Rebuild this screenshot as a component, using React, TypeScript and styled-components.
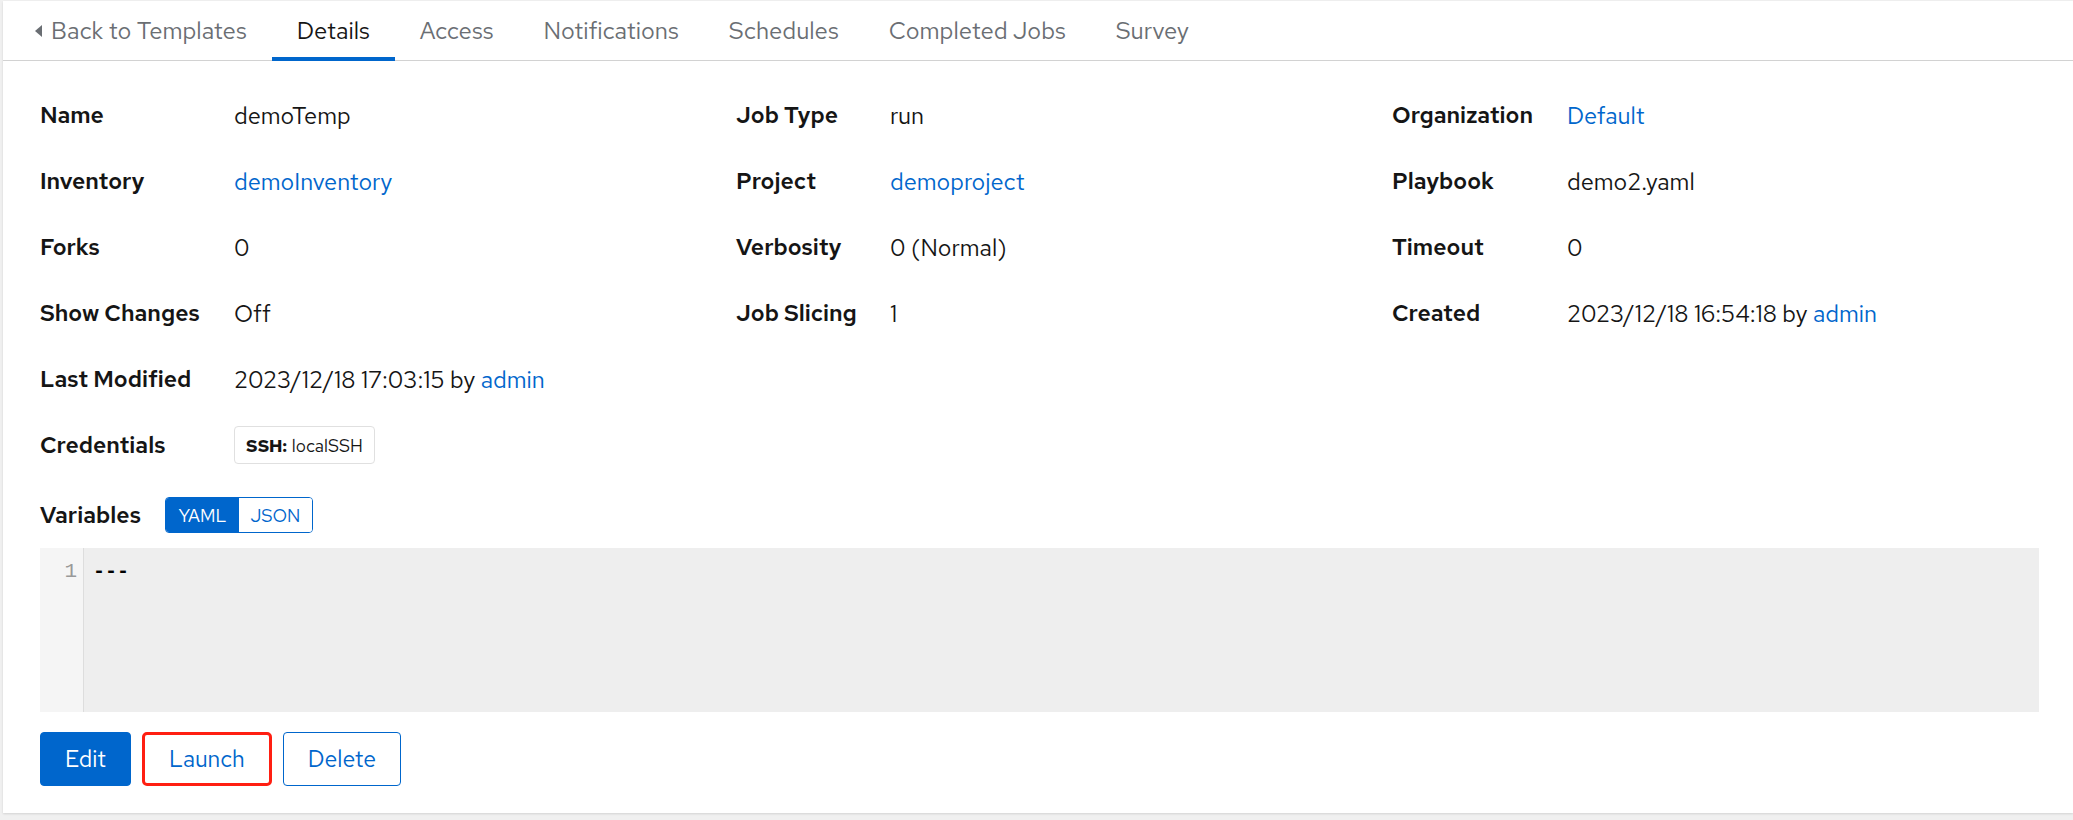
import React from "react";
import styled, { createGlobalStyle } from "styled-components";

const GlobalStyle = createGlobalStyle`
  html, body { margin: 0; padding: 0; }
  body {
    background: #f0f0f0;
    font-family: "Red Hat Text", "Open Sans", "Noto Sans", sans-serif;
    color: #151515;
  }
`;

const Page = styled.div`
  padding: 1px 0 0 3px;
  height: 820px;
  box-sizing: border-box;
`;

const Card = styled.div`
  background: #ffffff;
  box-shadow: 0 1px 2px rgba(0, 0, 0, 0.12);
`;

const TabBar = styled.nav`
  display: flex;
  height: 59px;
  padding-left: 7px;
  border-bottom: 1px solid #d2d2d2;
`;

const Tab = styled.a<{ $active?: boolean }>`
  position: relative;
  display: flex;
  align-items: center;
  gap: 9px;
  padding: 0 25px;
  font-size: 23.8px;
  color: ${(p) => (p.$active ? "#151515" : "#6a6e73")};
  text-decoration: none;
  white-space: nowrap;
  cursor: pointer;
  &::after {
    content: "";
    position: absolute;
    left: 0;
    right: 0;
    bottom: -1px;
    height: 4px;
    background: ${(p) => (p.$active ? "#0066cc" : "transparent")};
  }
`;

const Caret = styled.span`
  width: 0;
  height: 0;
  border-top: 6px solid transparent;
  border-bottom: 6px solid transparent;
  border-right: 7px solid #6a6e73;
`;

const Body = styled.div`
  padding: 34px 34px 27px 37px;
`;

const DetailGrid = styled.dl`
  display: grid;
  grid-template-columns: 164px 1fr 124px 1fr 145px 1fr;
  grid-auto-rows: 40px;
  column-gap: 30px;
  row-gap: 26px;
  align-items: center;
  margin: 0;
`;

const Label = styled.dt<{ $col: number }>`
  grid-column: ${(p) => p.$col * 2 - 1};
  font-size: 23px;
  font-weight: 600;
  white-space: nowrap;
`;

const Value = styled.dd<{ $col: number }>`
  grid-column: ${(p) => p.$col * 2};
  margin: 0;
  font-size: 23.5px;
  white-space: nowrap;
`;

const Link = styled.a`
  color: #0066cc;
  text-decoration: none;
`;

const Chip = styled.span`
  display: inline-flex;
  align-items: center;
  height: 38px;
  box-sizing: border-box;
  padding: 0 11px;
  border: 1px solid #e0e0e0;
  border-radius: 4px;
  font-size: 17.5px;
  gap: 5px;
  b { font-weight: 700; }
`;

const VarRow = styled.div`
  display: flex;
  align-items: center;
  gap: 24px;
  margin-top: 32px;
  height: 36px;
`;

const VarLabel = styled.span`
  font-size: 23px;
  font-weight: 600;
`;

const Toggle = styled.div`
  display: flex;
  height: 36px;
  box-sizing: border-box;
  border: 1px solid #0066cc;
  border-radius: 4px;
  overflow: hidden;
`;

const ToggleItem = styled.button<{ $on?: boolean }>`
  width: 73px;
  border: none;
  font-family: inherit;
  font-size: 18px;
  background: ${(p) => (p.$on ? "#0066cc" : "#ffffff")};
  color: ${(p) => (p.$on ? "#ffffff" : "#0066cc")};
  padding: 0;
`;

const Editor = styled.div`
  display: flex;
  margin-top: 15px;
  height: 164px;
  background: #eeeeee;
`;

const Gutter = styled.div`
  width: 44px;
  box-sizing: border-box;
  background: #f5f5f5;
  border-right: 1px solid #dddddd;
  padding: 11px 6px 0 0;
  text-align: right;
  font-family: "Liberation Mono", monospace;
  font-size: 21px;
  line-height: 26px;
  color: #999999;
`;

const Code = styled.pre`
  margin: 0;
  padding: 11px 0 0 9px;
  font-family: "Liberation Mono", monospace;
  font-size: 20px;
  font-weight: 700;
  line-height: 26px;
  color: #000000;
`;

const Actions = styled.div`
  display: flex;
  gap: 11px;
  margin-top: 20px;
`;

const Button = styled.button<{ $variant: "primary" | "secondary"; $highlight?: boolean }>`
  height: 54px;
  box-sizing: border-box;
  padding: 0 24px;
  font-family: inherit;
  font-size: 23px;
  border-radius: ${(p) => (p.$highlight ? "5px" : "4px")};
  background: ${(p) => (p.$variant === "primary" ? "#0066cc" : "#ffffff")};
  color: ${(p) => (p.$variant === "primary" ? "#ffffff" : "#0066cc")};
  border: ${(p) => (p.$highlight ? "3px solid #ff1f12" : "1px solid #0066cc")};
  cursor: pointer;
`;

type Item = { label: string; col: number; value: React.ReactNode };

const items: Item[] = [
  { label: "Name", col: 1, value: "demoTemp" },
  { label: "Job Type", col: 2, value: "run" },
  { label: "Organization", col: 3, value: <Link>Default</Link> },
  { label: "Inventory", col: 1, value: <Link>demoInventory</Link> },
  { label: "Project", col: 2, value: <Link>demoproject</Link> },
  { label: "Playbook", col: 3, value: "demo2.yaml" },
  { label: "Forks", col: 1, value: "0" },
  { label: "Verbosity", col: 2, value: "0 (Normal)" },
  { label: "Timeout", col: 3, value: "0" },
  { label: "Show Changes", col: 1, value: "Off" },
  { label: "Job Slicing", col: 2, value: "1" },
  {
    label: "Created",
    col: 3,
    value: (
      <>
        2023/12/18 16:54:18 by <Link>admin</Link>
      </>
    ),
  },
  {
    label: "Last Modified",
    col: 1,
    value: (
      <>
        2023/12/18 17:03:15 by <Link>admin</Link>
      </>
    ),
  },
  {
    label: "Credentials",
    col: 1,
    value: (
      <Chip>
        <b>SSH:</b> localSSH
      </Chip>
    ),
  },
];

const tabs = ["Details", "Access", "Notifications", "Schedules", "Completed Jobs", "Survey"];

export default function App() {
  return (
    <>
      <GlobalStyle />
      <Page>
        <Card>
          <TabBar>
            <Tab>
              <Caret />
              Back to Templates
            </Tab>
            {tabs.map((t) => (
              <Tab key={t} $active={t === "Details"}>
                {t}
              </Tab>
            ))}
          </TabBar>
          <Body>
            <DetailGrid>
              {items.map((it) => (
                <React.Fragment key={it.label}>
                  <Label $col={it.col}>{it.label}</Label>
                  <Value $col={it.col}>{it.value}</Value>
                </React.Fragment>
              ))}
            </DetailGrid>
            <VarRow>
              <VarLabel>Variables</VarLabel>
              <Toggle>
                <ToggleItem $on>YAML</ToggleItem>
                <ToggleItem>JSON</ToggleItem>
              </Toggle>
            </VarRow>
            <Editor>
              <Gutter>1</Gutter>
              <Code>---</Code>
            </Editor>
            <Actions>
              <Button $variant="primary">Edit</Button>
              <Button $variant="secondary" $highlight>
                Launch
              </Button>
              <Button $variant="secondary">Delete</Button>
            </Actions>
          </Body>
        </Card>
      </Page>
    </>
  );
}
